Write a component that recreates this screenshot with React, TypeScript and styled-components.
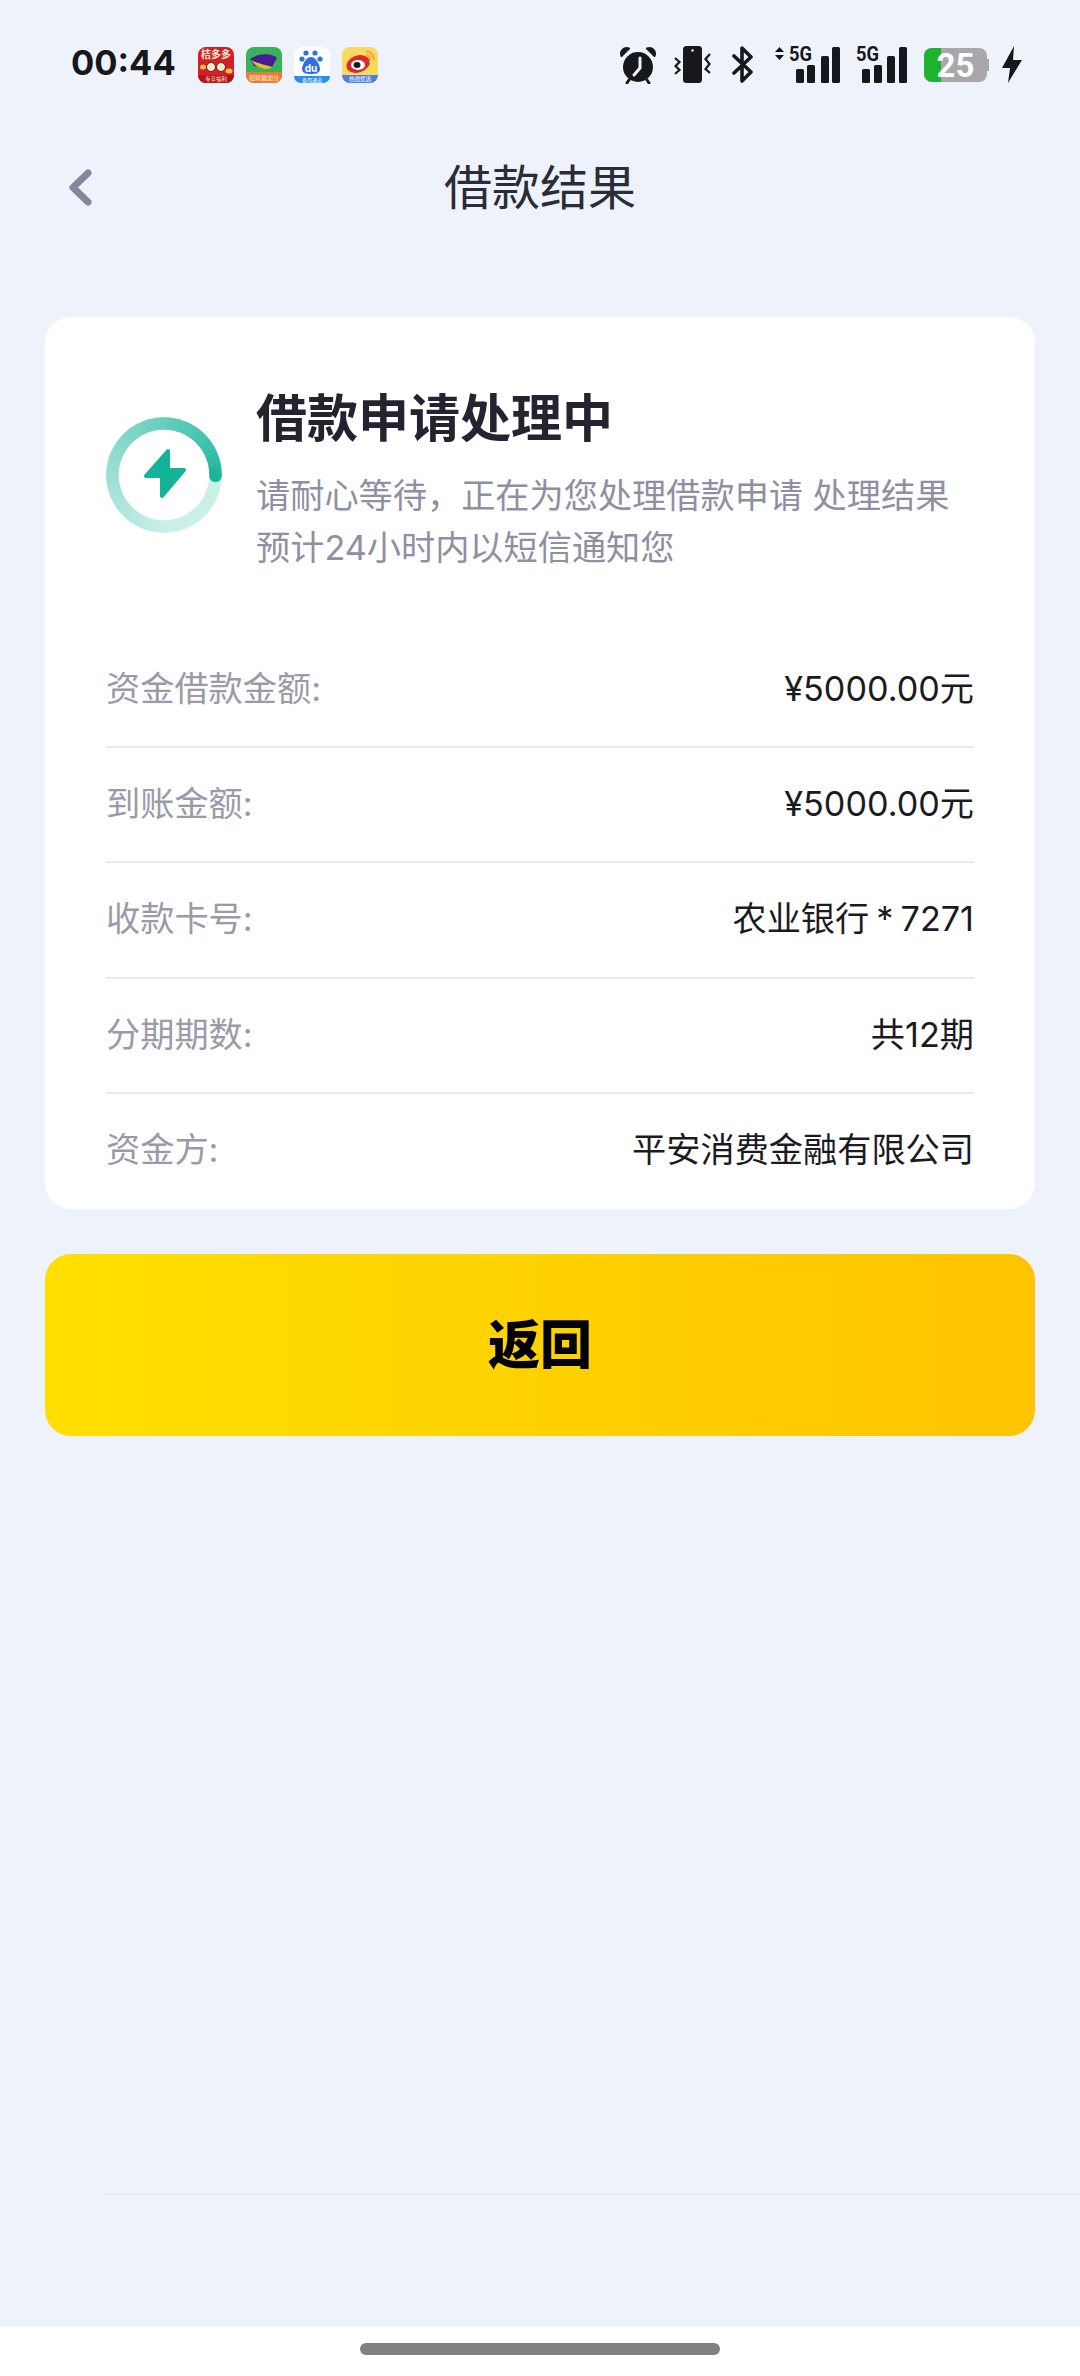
import React from 'react'
import styled, { createGlobalStyle } from 'styled-components'

const GlobalStyle = createGlobalStyle`
  html, body {
    margin: 0;
    padding: 0;
    background: #eef2fa;
    font-family: Inter, "Noto Sans CJK SC", sans-serif;
  }
  * { box-sizing: border-box; }
`

const Page = styled.div`
  width: 1080px;
  height: 2376px;
  display: flex;
  flex-direction: column;
  overflow: hidden;
  background: #eef2fa;
`

const StatusBar = styled.div`
  height: 124px;
  flex-shrink: 0;
  display: flex;
  justify-content: space-between;
  align-items: center;
  padding: 0 58px 0 71px;
`

const StatusLeft = styled.div`
  display: flex;
  align-items: center;
`

const Clock = styled.div`
  width: 127px;
  font-size: 34.5px;
  font-weight: 700;
  color: #17181c;
`

const AppIcons = styled.div`
  display: flex;
  gap: 12px;
  margin-top: 5px;
`

const StatusRight = styled.div`
  display: flex;
  align-items: center;
  margin-top: 5px;
`

const StatusIcon = styled.svg<{ $gap?: number }>`
  display: block;
  flex-shrink: 0;
  margin-left: ${(p) => p.$gap ?? 0}px;
`

const NavBar = styled.div`
  height: 128px;
  flex-shrink: 0;
  display: grid;
  grid-template-columns: 1fr auto 1fr;
  align-items: center;
  padding: 0 66px;
`

const NavTitle = styled.div`
  font-size: 48px;
  color: #2a2c36;
  line-height: 60px;
`

const Main = styled.div`
  flex: 1;
  padding: 65px 45px 0;
`

const Card = styled.div`
  background: #fff;
  border-radius: 26px;
  padding: 70px 61px 0;
`

const Summary = styled.div`
  display: flex;
  gap: 34px;
  margin-bottom: 59px;
`

const RingWrap = styled.div`
  flex-shrink: 0;
  width: 116px;
  height: 116px;
  margin-top: 30px;
`

const SummaryText = styled.div`
  flex: 1;
`

const SummaryTitle = styled.div`
  font-size: 51px;
  font-weight: 700;
  line-height: 64px;
  color: #23242f;
`

const SummaryDesc = styled.div`
  margin-top: 19px;
  width: 720px;
  font-size: 34.2px;
  line-height: 52px;
  color: #8f8fa3;
`

const Row = styled.div<{ $last?: boolean }>`
  height: 115.2px;
  display: flex;
  justify-content: space-between;
  align-items: center;
  padding-bottom: 7px;
  border-bottom: ${(p) => (p.$last ? '2px solid transparent' : '2px solid #e9ebf2')};
  font-size: 34.2px;
`

const RowLabel = styled.span`
  color: #9a9aa8;
`

const RowValue = styled.span`
  color: #1b1b1f;
  word-spacing: -2.5px;
`

const BackButton = styled.button`
  width: 100%;
  height: 182px;
  margin-top: 45px;
  padding: 0 0 6px;
  display: flex;
  justify-content: center;
  align-items: center;
  border: none;
  border-radius: 26px;
  background: linear-gradient(90deg, #ffdf00 0%, #ffc400 100%);
  font-family: inherit;
  font-size: 52px;
  font-weight: 900;
  color: #000;
`

const FootLine = styled.div`
  height: 2px;
  flex-shrink: 0;
  margin: 0 0 132px 102px;
  background: #e9ecf5;
`

const HomeArea = styled.div`
  height: 49px;
  flex-shrink: 0;
  display: flex;
  justify-content: center;
  padding-top: 16px;
  background: #fff;
`

const HomePill = styled.div`
  width: 360px;
  height: 12px;
  border-radius: 6px;
  background: #808080;
`

const rows = [
  { label: '资金借款金额:', value: '¥5000.00元' },
  { label: '到账金额:', value: '¥5000.00元' },
  { label: '收款卡号:', value: '农业银行 * 7271' },
  { label: '分期期数:', value: '共12期' },
  { label: '资金方:', value: '平安消费金融有限公司' },
]

function mix(t: number) {
  const a = [26, 181, 155]
  const b = [201, 239, 232]
  const c = a.map((v, i) => Math.round(v + (b[i] - v) * t))
  return `rgb(${c[0]},${c[1]},${c[2]})`
}

function ProgressRing() {
  const r = 51.5
  const c = 58
  const segs = []
  // goes anti-clockwise from 3 o'clock, fading out
  for (let d = 0; d < 360; d += 4) {
    const a1 = (-d * Math.PI) / 180
    const a2 = (-(d + 4.6) * Math.PI) / 180
    const t = Math.min(1, Math.pow(d / 270, 0.75))
    segs.push(
      <path
        key={d}
        d={`M${c + r * Math.cos(a1)} ${c + r * Math.sin(a1)}A${r} ${r} 0 0 0 ${c + r * Math.cos(a2)} ${c + r * Math.sin(a2)}`}
        fill="none"
        stroke={mix(t)}
        strokeWidth="12.5"
      />,
    )
  }
  return (
    <svg width="116" height="116" viewBox="0 0 116 116">
      {segs}
      <circle cx={c + r} cy={c + 1} r="6.25" fill="#1ab59b" />
      <path
        d="M62 -1 L40 24 H56 V44 L78 18 H62 Z"
        transform="translate(0 35)"
        fill="#14b398"
        stroke="#14b398"
        strokeWidth="4"
        strokeLinejoin="round"
      />
    </svg>
  )
}

function AppJuzi() {
  return (
    <svg width="36" height="36" viewBox="0 0 36 36">
      <rect width="36" height="36" rx="8" fill="#d3202a" />
      <text x="18" y="11" fontSize="10" fontWeight="700" textAnchor="middle" fill="#ffe9c9" fontFamily="Noto Sans CJK SC">桔多多</text>
      <circle cx="13" cy="20" r="4.5" fill="#f8e8c4" stroke="#5b2a12" strokeWidth="1" />
      <circle cx="23" cy="20" r="4.5" fill="#f8e8c4" stroke="#5b2a12" strokeWidth="1" />
      <ellipse cx="5" cy="20" rx="3" ry="2.5" fill="#f5c24c" />
      <ellipse cx="31" cy="24" rx="3.5" ry="2.5" fill="#f5c24c" />
      <path d="M0 28H36V28A8 8 0 0 1 28 36H8A8 8 0 0 1 0 28Z" fill="#b3121c" />
      <text x="18" y="34" fontSize="5.5" textAnchor="middle" fill="#ffe9c9" fontFamily="Noto Sans CJK SC">专享福利</text>
    </svg>
  )
}

function AppBird() {
  return (
    <svg width="36" height="36" viewBox="0 0 36 36">
      <rect width="36" height="36" rx="8" fill="#37b45b" />
      <path d="M4 12C12 6 26 6 31 11L26 20C20 18 12 20 8 19Z" fill="#4a1a9a" />
      <path d="M5 13C10 16 20 18 26 20L22 22C14 22 8 18 5 13Z" fill="#e2c21e" />
      <path d="M0 25H36V28A8 8 0 0 1 28 36H8A8 8 0 0 1 0 28Z" fill="#ef7a34" />
      <text x="18" y="33" fontSize="6" textAnchor="middle" fill="#fff2d8" fontFamily="Noto Sans CJK SC">招财猫加分</text>
    </svg>
  )
}

function AppBaidu() {
  return (
    <svg width="36" height="36" viewBox="0 0 36 36">
      <rect width="36" height="36" rx="8" fill="#fff" />
      <circle cx="12" cy="6" r="2.6" fill="#2f6fe0" />
      <circle cx="21" cy="6" r="2.6" fill="#2f6fe0" />
      <circle cx="8" cy="12" r="2.6" fill="#2f6fe0" />
      <circle cx="26" cy="12" r="2.6" fill="#2f6fe0" />
      <path d="M17 10C22 10 26 18 26 22C26 26 22 27 17 27C12 27 8 26 8 22C8 18 12 10 17 10Z" fill="#2f6fe0" />
      <text x="17" y="24.5" fontSize="10" fontWeight="700" textAnchor="middle" fill="#fff" fontFamily="Inter">du</text>
      <path d="M0 29H36V29A7 7 0 0 1 29 36H7A7 7 0 0 1 0 29Z" fill="#2a8fe8" />
      <text x="18" y="34.5" fontSize="5" textAnchor="middle" fill="#fff" fontFamily="Noto Sans CJK SC">备用通道</text>
    </svg>
  )
}

function AppWeibo() {
  return (
    <svg width="36" height="36" viewBox="0 0 36 36">
      <rect width="36" height="36" rx="8" fill="#fbd95c" />
      <path d="M24 4A9 9 0 0 1 32 13" fill="none" stroke="#f2a93a" strokeWidth="2" />
      <path d="M24 8A5 5 0 0 1 28 13" fill="none" stroke="#f2a93a" strokeWidth="2" />
      <ellipse cx="16" cy="17" rx="12" ry="8.5" fill="#e0282e" transform="rotate(-18 16 17)" />
      <ellipse cx="16" cy="18" rx="7" ry="5" fill="#fff" />
      <ellipse cx="15" cy="18" rx="3.5" ry="3" fill="#1b1b1f" />
      <path d="M0 28H36V28A8 8 0 0 1 28 36H8A8 8 0 0 1 0 28Z" fill="#4f7fe0" />
      <text x="18" y="34" fontSize="5.5" textAnchor="middle" fill="#fff" fontFamily="Noto Sans CJK SC">热搜优选</text>
    </svg>
  )
}

function Signal({ gap, arrows }: { gap: number; arrows?: boolean }) {
  const bx = arrows ? [21, 32, 46, 57] : [6, 18, 31, 43]
  const h = [14, 18, 27, 36]
  const tx = arrows ? 14 : 0
  const w = arrows ? 65 : 51
  return (
    <StatusIcon $gap={gap} width={w} height="49" viewBox={`0 -6 ${w} 49`}>
      {arrows && <path d="M4.5 1L9 6H0ZM4.5 14L0 9H9Z" fill="#17181c" />}
      <text x={tx} y="14.5" fontSize="20" fontWeight="700" fill="#17181c" fontFamily="Roboto" textLength="23" lengthAdjust="spacingAndGlyphs">5G</text>
      {bx.map((x, i) => (
        <rect key={x} x={x} y={37 - h[i]} width="8" height={h[i]} rx="1.5" fill="#17181c" />
      ))}
    </StatusIcon>
  )
}

function App() {
  return (
    <Page>
      <GlobalStyle />
      <StatusBar>
        <StatusLeft>
          <Clock>00:44</Clock>
          <AppIcons>
            <AppJuzi />
            <AppBird />
            <AppBaidu />
            <AppWeibo />
          </AppIcons>
        </StatusLeft>
        <StatusRight>
          <StatusIcon width="38" height="38" viewBox="0 0 38 38">
            <circle cx="19" cy="21" r="15" fill="#17181c" />
            <path d="M2.5 10C0.5 5 5 0.5 10 2.5Z M35.5 10C37.5 5 33 0.5 28 2.5Z" fill="#17181c" stroke="#17181c" strokeWidth="2" strokeLinejoin="round" />
            <path d="M10 34L8 37M28 34L30 37" stroke="#17181c" strokeWidth="3" strokeLinecap="round" />
            <path d="M21 12V22L15 29" fill="none" stroke="#eef2fa" strokeWidth="3" strokeLinecap="round" strokeLinejoin="round" />
          </StatusIcon>
          <StatusIcon $gap={17} width="37" height="37" viewBox="0 0 37 37">
            <rect x="9" y="0" width="19" height="37" rx="3.5" fill="#17181c" />
            <circle cx="18.5" cy="4.5" r="1.2" fill="#eef2fa" />
            <path d="M1 12L5.5 16L1.5 20L5.5 24L1 28" fill="none" stroke="#17181c" strokeWidth="2.2" />
            <path d="M36 8L31.5 13L35.5 18L31.5 23L36 27" fill="none" stroke="#17181c" strokeWidth="2.2" />
          </StatusIcon>
          <StatusIcon $gap={21} width="21" height="37" viewBox="0 0 21 37">
            <path d="M2 10L19 26L10 35V2L19 11L2 27" fill="none" stroke="#17181c" strokeWidth="3.6" strokeLinecap="round" strokeLinejoin="round" />
          </StatusIcon>
          <Signal gap={22} arrows />
          <Signal gap={16} />
          <StatusIcon $gap={17} width="66" height="48" viewBox="0 -6 66 48">
            <path d="M63 12H65V24H63Z" fill="#a8a8ac" />
            <rect x="0" y="1" width="63" height="34" rx="8" fill="#a8a8ac" />
            <path d="M8 1H17V35H8A8 8 0 0 1 0 27V9A8 8 0 0 1 8 1Z" fill="#1db32d" />
            <text x="31.5" y="29.5" fontSize="33" fontWeight="700" textAnchor="middle" fill="#fff" fontFamily="Roboto">25</text>
          </StatusIcon>
          <StatusIcon $gap={12} width="20" height="37" viewBox="0 0 20 37">
            <path d="M12 0L0 22H8L6 37L20 14H11Z" fill="#17181c" />
          </StatusIcon>
        </StatusRight>
      </StatusBar>

      <NavBar>
        <svg width="27" height="40" viewBox="0 0 27 40">
          <path d="M22 5L7 19.5L22 34" fill="none" stroke="#8686a0" strokeWidth="7" strokeLinecap="round" strokeLinejoin="round" />
        </svg>
        <NavTitle>借款结果</NavTitle>
        <div />
      </NavBar>

      <Main>
        <Card>
          <Summary>
            <RingWrap>
              <ProgressRing />
            </RingWrap>
            <SummaryText>
              <SummaryTitle>借款申请处理中</SummaryTitle>
              <SummaryDesc>请耐心等待，正在为您处理借款申请 处理结果预计24小时内以短信通知您</SummaryDesc>
            </SummaryText>
          </Summary>
          {rows.map((row, i) => (
            <Row key={row.label} $last={i === rows.length - 1}>
              <RowLabel>{row.label}</RowLabel>
              <RowValue>{row.value}</RowValue>
            </Row>
          ))}
        </Card>
        <BackButton>返回</BackButton>
      </Main>

      <FootLine />
      <HomeArea>
        <HomePill />
      </HomeArea>
    </Page>
  )
}

export default App
